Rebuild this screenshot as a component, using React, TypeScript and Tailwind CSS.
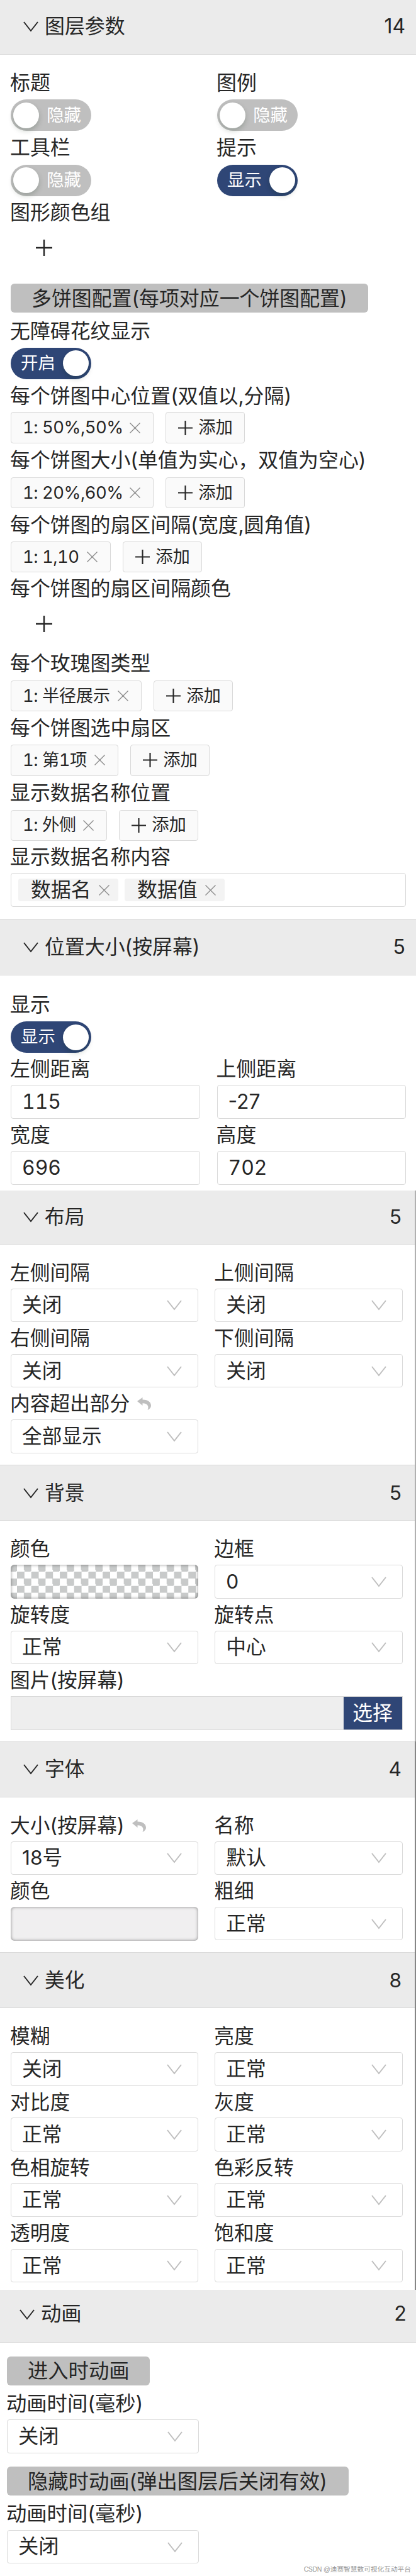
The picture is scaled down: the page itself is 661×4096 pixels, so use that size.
import type { ReactNode } from "react";
import clsx from "clsx";

function Chevron({ className }: { className?: string }) {
  return (
    <svg viewBox="0 0 24 18" className={clsx("h-[18px] w-6 shrink-0", className)} fill="none" stroke="currentColor" strokeWidth="2">
      <path d="M1 2 L12 16 L23 2" />
    </svg>
  );
}

function Plus({ className }: { className?: string }) {
  return (
    <svg viewBox="0 0 26 26" className={clsx("shrink-0", className)} fill="none" stroke="currentColor" strokeWidth="2.4">
      <path d="M13 0 V26 M0 13 H26" />
    </svg>
  );
}

function Close({ className }: { className?: string }) {
  return (
    <svg viewBox="0 0 17 17" className={clsx("h-[17px] w-[17px] shrink-0 text-[#8c8c8c]", className)} fill="none" stroke="currentColor" strokeWidth="1.4">
      <path d="M0.5 0.5 L16.5 16.5 M16.5 0.5 L0.5 16.5" />
    </svg>
  );
}

function Undo() {
  return (
    <svg viewBox="0 0 22 20" className="ml-3 h-5 w-[22px] shrink-0 text-[#bfbfbf]" fill="currentColor">
      <path d="M0 6 L8.5 0 V3.5 C18 3.5 22 8 22 13 C22 16 20 18.5 16.5 20 C19 14.5 17 9.5 8.5 9.2 V13 Z" />
    </svg>
  );
}

function Header({ title, count, className }: { title: string; count: number; className?: string }) {
  return (
    <div className={clsx("flex shrink-0 items-center border-[#d9d9d9] bg-[#ebebeb]", className)}>
      <Chevron className="mr-2.5" />
      <span>{title}</span>
      <span className="ml-auto">{count}</span>
    </div>
  );
}

function Field({ label, labelClass = "h-[50.5px]", undo, children }: { label: string; labelClass?: string; undo?: boolean; children?: ReactNode }) {
  return (
    <div>
      <div className={clsx("-ml-px flex items-center pt-px whitespace-nowrap", labelClass)}>
        {label}
        {undo && <Undo />}
      </div>
      {children}
    </div>
  );
}

function Switch({ on, text }: { on?: boolean; text: string }) {
  return (
    <div
      className={clsx(
        "flex h-[50px] w-32 items-center justify-between rounded-full px-1 text-[27.4px] text-white",
        on ? "flex-row-reverse bg-[#2f4676]" : "bg-[#bfbfbf]"
      )}
    >
      <span className="h-[41px] w-[41px] rounded-full bg-white shadow-[0_4px_8px_rgba(0,35,11,0.2)]" />
      <span className="mx-3">{text}</span>
    </div>
  );
}

function Tags({ value, width }: { value: string; width: string }) {
  return (
    <div className="flex h-[49.4px] gap-[19px] text-[27.4px]">
      <div className={clsx("flex items-center justify-between rounded border border-[#d9d9d9] bg-[#fafafa] pr-5 pl-[18px] whitespace-nowrap tabular-nums", width)}>
        <span className="tracking-[-0.5px]">{value}</span>
        <Close />
      </div>
      <div className="flex w-[126px] items-center justify-between rounded border border-[#d9d9d9] bg-[#fafafa] pr-[18px] pl-[19px]">
        <Plus className="h-[23px] w-[23px]" />
        添加
      </div>
    </div>
  );
}

function Input({ value, className = "tabular-nums" }: { value: string; className?: string }) {
  return <div className={clsx("flex h-[54px] items-center rounded border border-[#d9d9d9] pl-[17px]", className)}>{value}</div>;
}

function Select({ value }: { value: string }) {
  return (
    <div className="flex h-[53.7px] items-center justify-between rounded border border-[#d9d9d9] pr-[25px] pl-[17px]">
      {value}
      <Chevron className="text-[#bfbfbf]" />
    </div>
  );
}

function Badge({ children, className }: { children: ReactNode; className?: string }) {
  return <div className={clsx("flex h-[46px] items-center rounded-md bg-[#bfbfbf] pt-0.5 pl-[33px] whitespace-nowrap", className)}>{children}</div>;
}

const SWITCH_LABEL = "h-[53.3px]";
const TAG_LABEL = "h-[53.9px]";

const effects = [
  ["模糊", "关闭"],
  ["亮度", "正常"],
  ["对比度", "正常"],
  ["灰度", "正常"],
  ["色相旋转", "正常"],
  ["色彩反转", "正常"],
  ["透明度", "正常"],
  ["饱和度", "正常"],
];

export default function App() {
  return (
    <main className="relative flex h-[4096px] w-[661px] flex-col overflow-hidden bg-white font-[Inter,'Noto_Sans_CJK_SC',sans-serif] text-[31.9px] leading-none text-[#262626]">
      <section className="h-[1461px] shrink-0">
        <Header title="图层参数" count={14} className="h-[87px] border-b pr-[17px] pb-0.5 pl-[37px]" />
        <div className="px-[17px] pt-[18px]">
          <div className="grid grid-cols-[328px_1fr]">
            <Field label="标题" labelClass={SWITCH_LABEL}>
              <Switch text="隐藏" />
            </Field>
            <Field label="图例" labelClass={SWITCH_LABEL}>
              <Switch text="隐藏" />
            </Field>
            <Field label="工具栏" labelClass={SWITCH_LABEL}>
              <Switch text="隐藏" />
            </Field>
            <Field label="提示" labelClass={SWITCH_LABEL}>
              <Switch on text="显示" />
            </Field>
          </div>
          <Field label="图形颜色组" labelClass="h-[51.5px]">
            <div className="h-[87.5px] pt-[17.5px] pl-10">
              <Plus className="h-[26px] w-[26px]" />
            </div>
          </Field>
          <Badge className="mb-[3px] w-[568px]">多饼图配置(每项对应一个饼图配置)</Badge>
          <Field label="无障碍花纹显示" labelClass={SWITCH_LABEL}>
            <Switch on text="开启" />
          </Field>
          <Field label="每个饼图中心位置(双值以,分隔)" labelClass="h-[52.5px]">
            <Tags value="1: 50%,50%" width="w-[227px]" />
          </Field>
          <Field label="每个饼图大小(单值为实心，双值为空心)" labelClass={TAG_LABEL}>
            <Tags value="1: 20%,60%" width="w-[227px]" />
          </Field>
          <Field label="每个饼图的扇区间隔(宽度,圆角值)" labelClass="h-[52.8px]">
            <Tags value="1: 1,10" width="w-[159px]" />
          </Field>
          <Field label="每个饼图的扇区间隔颜色">
            <div className="h-[67.2px] pt-[18.5px] pl-10">
              <Plus className="h-[26px] w-[26px]" />
            </div>
          </Field>
          <Field label="每个玫瑰图类型" labelClass={TAG_LABEL}>
            <Tags value="1: 半径展示" width="w-[208px]" />
          </Field>
          <Field label="每个饼图选中扇区" labelClass="h-[53px]">
            <Tags value="1: 第1项" width="w-[171px]" />
          </Field>
          <Field label="显示数据名称位置" labelClass={TAG_LABEL}>
            <Tags value="1: 外侧" width="w-[153px]" />
          </Field>
          <Field label="显示数据名称内容" labelClass="h-[51.4px]">
            <div className="flex h-[54px] w-[628px] items-center gap-2.5 rounded border border-[#d9d9d9] pl-[11px]">
              {["数据名", "数据值"].map((name) => (
                <div key={name} className="flex h-9 w-[159px] items-center justify-between rounded bg-[#f3f3f3] pr-[14px] pl-5">
                  {name}
                  <Close />
                </div>
              ))}
            </div>
          </Field>
        </div>
      </section>

      <section className="h-[431.5px] shrink-0">
        <Header title="位置大小(按屏幕)" count={5} className="h-[90px] border-y pr-[17px] pl-[37px]" />
        <div className="px-4 pt-5 pl-[17px]">
          <Field label="显示" labelClass="h-[53px]">
            <Switch on text="显示" />
          </Field>
          <div className="grid grid-cols-2 gap-x-[27px]">
            <Field label="左侧距离" labelClass="h-[51px]">
              <Input value="115" />
            </Field>
            <Field label="上侧距离" labelClass="h-[51px]">
              <Input value="-27" className="proportional-nums" />
            </Field>
            <Field label="宽度" labelClass="h-[51.4px]">
              <Input value="696" />
            </Field>
            <Field label="高度" labelClass="h-[51.4px]">
              <Input value="702" />
            </Field>
          </div>
        </div>
      </section>

      <div className="shrink-0 text-[31.7px]">
        <section className="h-[436.5px] border-r-2 border-[#b0b0b0]">
          <Header title="布局" count={5} className="h-[86px] border-b pr-[21px] pl-[37px]" />
          <div className="grid grid-cols-2 gap-x-[26px] pt-[19.5px] pr-[19.5px] pl-[17px]">
            <Field label="左侧间隔">
              <Select value="关闭" />
            </Field>
            <Field label="上侧间隔">
              <Select value="关闭" />
            </Field>
            <Field label="右侧间隔">
              <Select value="关闭" />
            </Field>
            <Field label="下侧间隔">
              <Select value="关闭" />
            </Field>
            <Field label="内容超出部分" undo>
              <Select value="全部显示" />
            </Field>
          </div>
        </section>

        <section className="h-[439.5px] border-r-2 border-[#b0b0b0]">
          <Header title="背景" count={5} className="h-[89px] border-y pr-[21px] pl-[37px]" />
          <div className="grid grid-cols-2 gap-x-[26px] pt-[19.5px] pr-[19.5px] pl-[17px]">
            <Field label="颜色">
              <div className="h-[54px] rounded-md bg-[repeating-conic-gradient(#c8caca_0_25%,#fff_0_50%)] bg-size-[22.7px_22.7px] bg-position-[-12.7px_-0.8px] shadow-[inset_0_0_5px_rgba(0,0,0,0.45)]" />
            </Field>
            <Field label="边框">
              <Select value="0" />
            </Field>
            <Field label="旋转度">
              <Select value="正常" />
            </Field>
            <Field label="旋转点">
              <Select value="中心" />
            </Field>
            <div className="col-span-2">
              <Field label="图片(按屏幕)">
                <div className="flex h-[54px] justify-end border border-[#d9d9d9] bg-[#eee]">
                  <div className="flex w-[93px] items-center justify-center bg-[#2f4676] text-white">选择</div>
                </div>
              </Field>
            </div>
          </div>
        </section>

        <section className="h-[335.5px] border-r-2 border-[#858585]">
          <Header title="字体" count={4} className="h-[89px] border-y pr-[21px] pl-[37px]" />
          <div className="grid grid-cols-2 gap-x-[26px] pt-[19.5px] pr-[19.5px] pl-[17px]">
            <Field label="大小(按屏幕)" undo>
              <Select value="18号" />
            </Field>
            <Field label="名称">
              <Select value="默认" />
            </Field>
            <Field label="颜色">
              <div className="h-[54px] rounded-md bg-[#f0eff0] shadow-[inset_0_0_5px_rgba(0,0,0,0.45)]" />
            </Field>
            <Field label="粗细">
              <Select value="正常" />
            </Field>
          </div>
        </section>

        <section className="h-[537px] border-r-2 border-[#858585]">
          <Header title="美化" count={8} className="h-[89px] border-y pr-[21px] pl-[37px]" />
          <div className="grid grid-cols-2 gap-x-[26px] pt-[19.5px] pr-[19.5px] pl-[17px]">
            {effects.map(([label, value]) => (
              <Field key={label} label={label}>
                <Select value={value} />
              </Field>
            ))}
          </div>
        </section>
      </div>

      <section className="h-[455px] shrink-0 text-[32.3px]">
        <Header title="动画" count={2} className="h-[84px] border-b pr-[15px] pb-1.5 pl-[31px]" />
        <div className="w-[316px] pt-[21.5px] pl-[11px]">
          <Badge className="mb-[3px] w-[227px]">进入时动画</Badge>
          <Field label="动画时间(毫秒)" labelClass="h-[51.5px]">
            <Select value="关闭" />
          </Field>
          <Badge className="mt-[21.5px] mb-[3px] w-[543px]">隐藏时动画(弹出图层后关闭有效)</Badge>
          <Field label="动画时间(毫秒)" labelClass="h-[51.5px]">
            <Select value="关闭" />
          </Field>
        </div>
      </section>
      <span className="absolute right-2 bottom-[5px] font-['Liberation_Sans','Noto_Sans_CJK_SC',sans-serif] text-[10.7px] text-[#999]">
        <span className="tracking-[-0.5px]">CSDN</span> @迪赛智慧数可视化互动平台
      </span>
    </main>
  );
}
